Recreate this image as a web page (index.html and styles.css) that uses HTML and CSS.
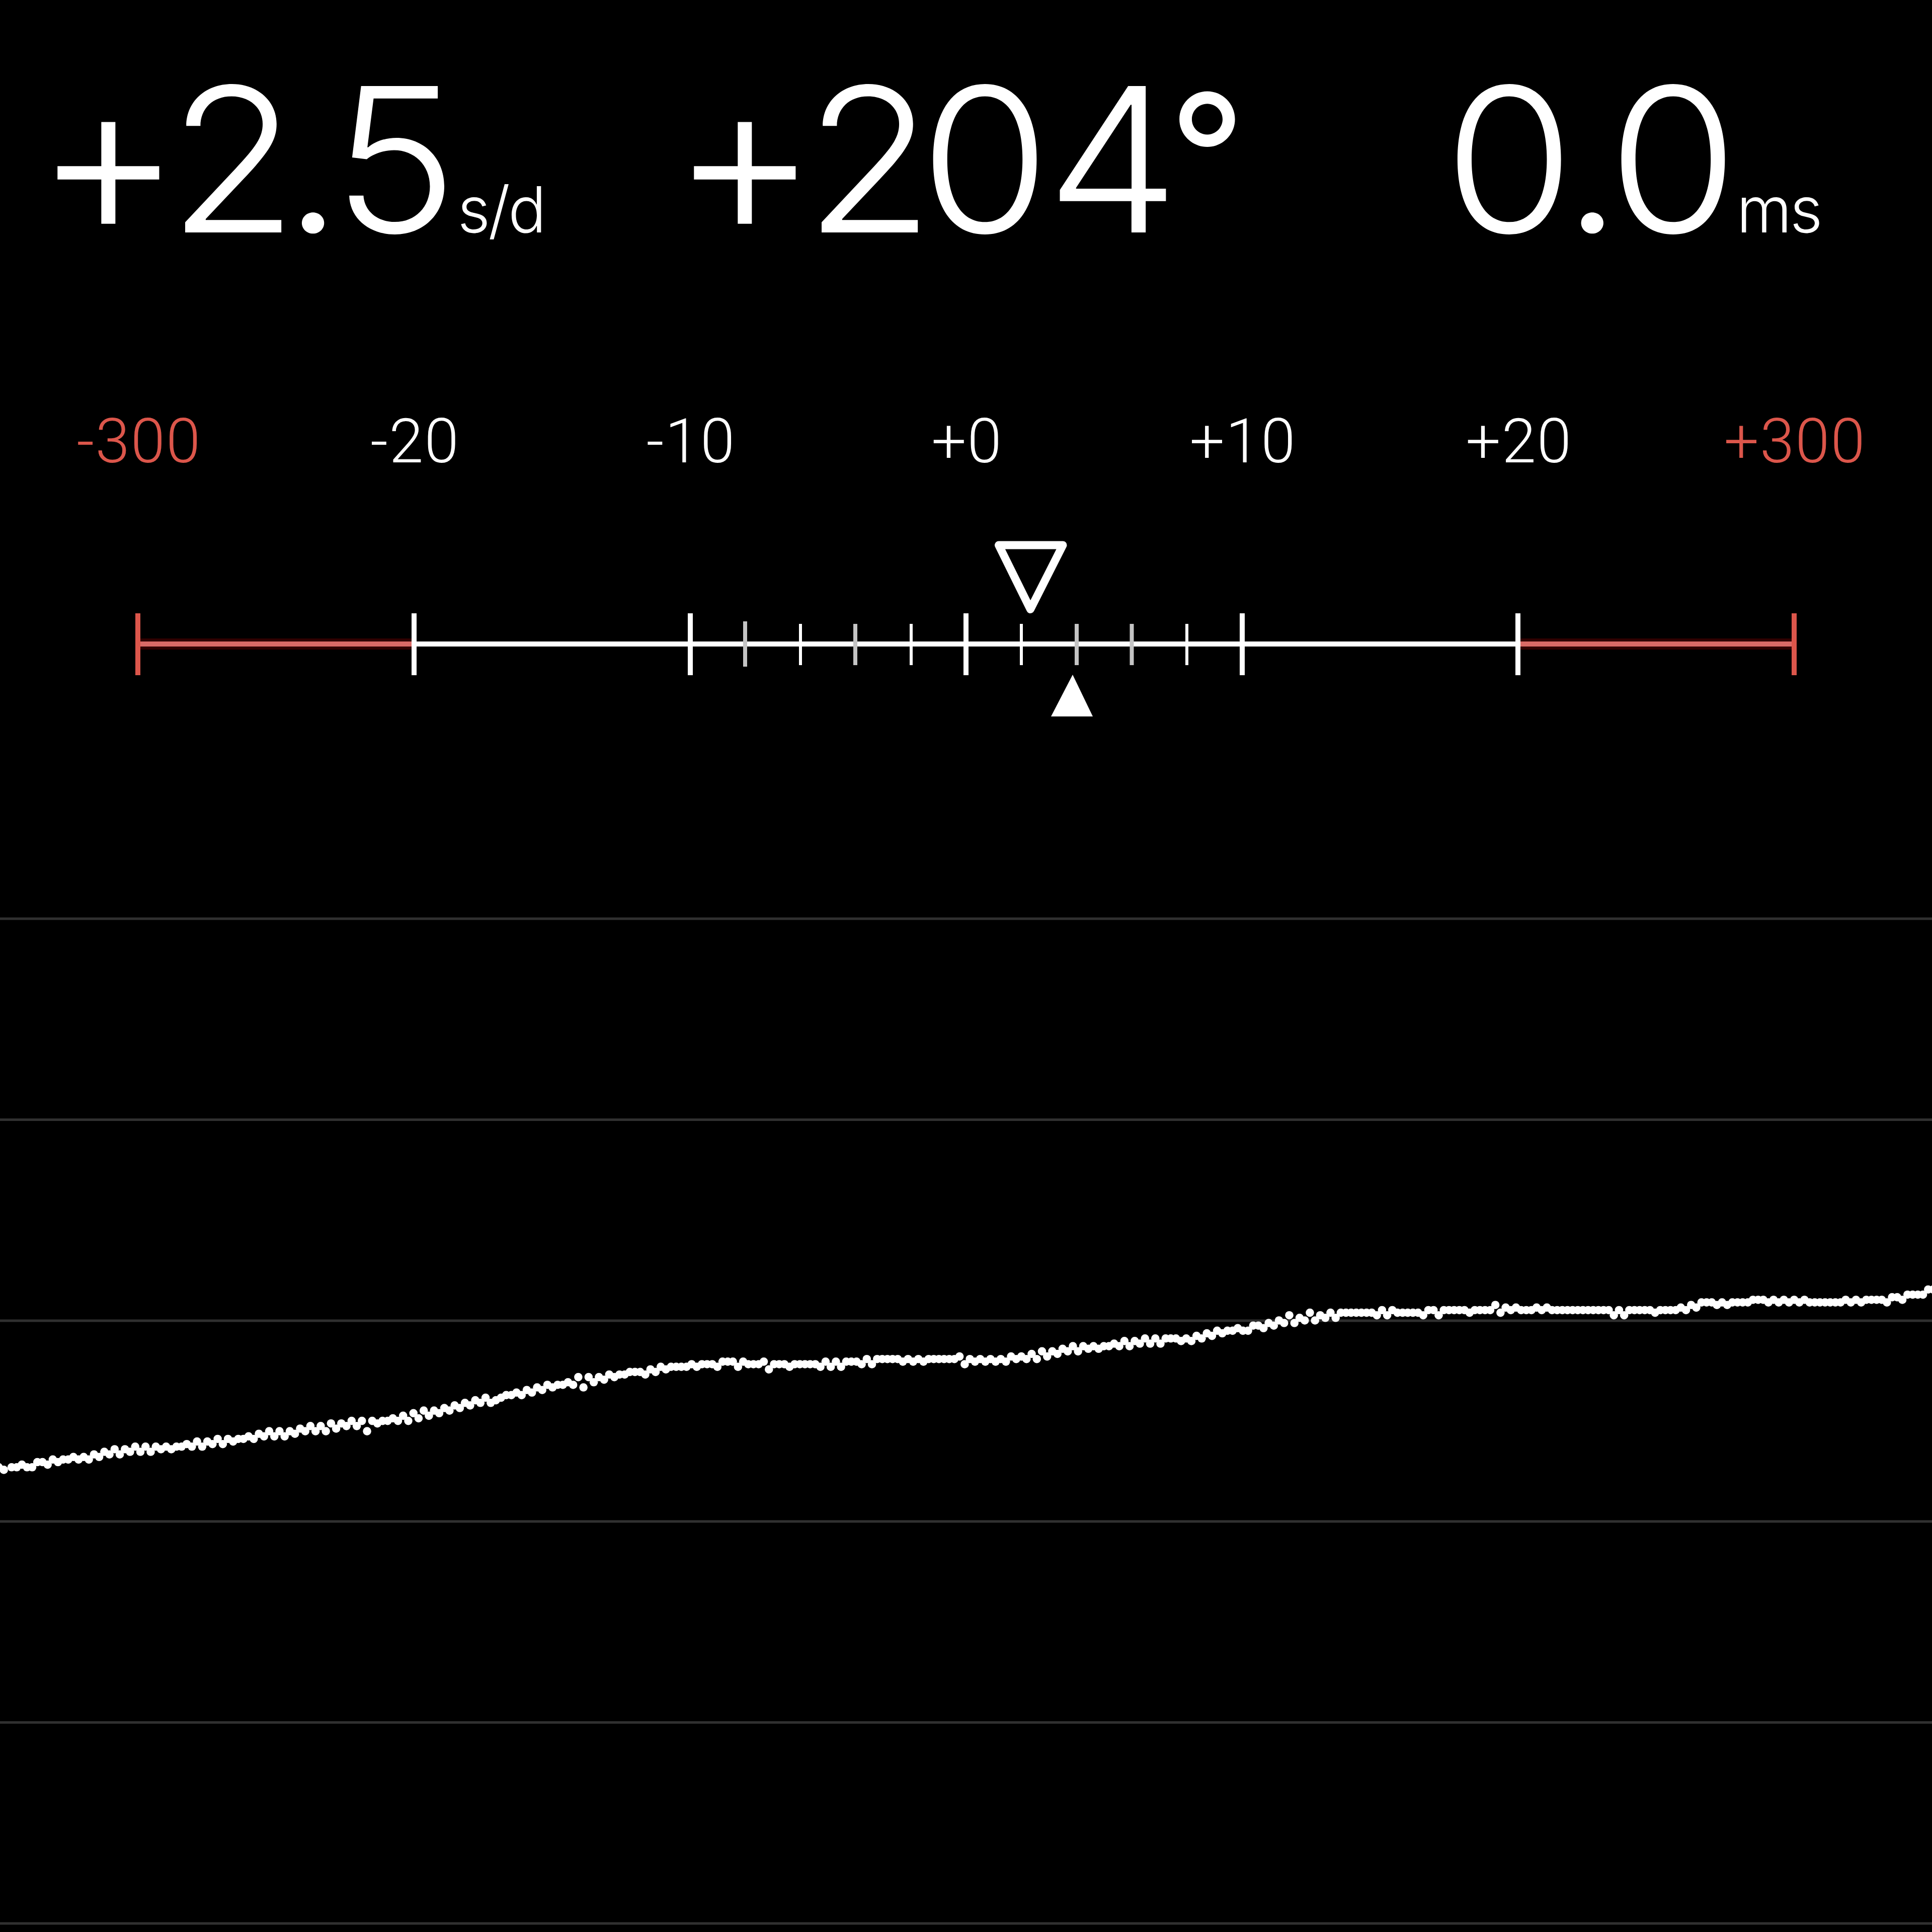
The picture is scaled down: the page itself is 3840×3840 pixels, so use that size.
FILE: index.html
```html
<!DOCTYPE html>
<html lang="en">
  <head>
    <meta charset="utf-8">
    <title>Timegrapher</title>
    <link rel="stylesheet" href="styles.css">
  </head>
  <body>

    <div class="timegrapher">

      <div class="readouts">
        <div class="readout rate"><span class="sign">+</span><span class="value"><span class="lead">2</span>.5</span><span class="unit">s/d</span></div>
        <div class="readout amplitude"><span class="sign">+</span><span class="value"><span class="lead">2</span>04</span><span class="degree">°</span></div>
        <div class="readout beat"><span class="value"><span class="lead">0</span>.0</span><span class="unit">ms</span></div>
      </div>

      <div class="labels">
        <span class="label limit">-300</span>
        <span class="label">-20</span>
        <span class="label">-10</span>
        <span class="label">+0</span>
        <span class="label">+10</span>
        <span class="label">+20</span>
        <span class="label limit">+300</span>
      </div>

      <svg class="scale" viewBox="0 0 3840 380">
        <!-- line -->
        <path class="halo" d="M274 220H823M3017 220H3566"/>
        <path class="axis-limit" d="M274 220H823M3017 220H3566"/>
        <path class="axis" d="M823 220H3017"/>

        <!-- ticks -->
        <path class="minor soft" d="M1481 175V265M1700 180V262M2140 180V262M2249.500 180V262"/>
        <path class="minor" d="M1591 180V262M1811 180V262M2030 180V262M2359 180V262"/>
        <path class="major" d="M823 159V282M1372 159V282M1920 159V282M2469 159V282M3017 159V282"/>
        <path class="major major-limit" d="M274 159V282M3566 159V282"/>

        <!-- markers -->
        <path class="marker-current" d="M1985 23.500H2112.500L2048 151Z"/>
        <path class="marker-average" d="M2132 281L2172 364H2089Z"/>
      </svg>

      <svg class="chart" id="chart" viewBox="0 0 3840 2400">
        <path class="grid" d="M0 386H3840M0 785.500H3840M0 1185H3840M0 1584H3840M0 1983.500H3840M0 2383H3840"/>
        <g id="trace"></g>
      </svg>

    </div>

    <script src="trace.js"></script>
  </body>
</html>
```
FILE: styles.css
```css
html, body {
  margin: 0;
  background-color: #000;
}

.timegrapher {
  width: 3840px;
  height: 3840px;
  overflow: hidden;
  display: flex;
  flex-direction: column;
  background-color: #000;
  color: #fff;
  font-family: Inter, "Liberation Sans", sans-serif;
  font-weight: 300;
}

/* Readouts */

.readouts {
  height: 780px;
  display: grid;
  grid-template-columns: 1280px 1280px 1280px;
  box-sizing: border-box;
  padding-top: 66px;
}

.readout {
  font-size: 400px;
  line-height: 500px;
  white-space: nowrap;
}

.rate {
  padding-left: 69px;
}

.amplitude {
  padding-left: 54px;
}

.beat {
  padding-left: 310px;
}

.sign {
  font-size: 448px;
  line-height: 0;
  letter-spacing: -28px;
  vertical-align: -9px;
}

.value {
  display: inline-block;
  letter-spacing: -0.035em;
  transform: scaleX(1.05);
  transform-origin: left;
}

.amplitude .value {
  letter-spacing: -0.018em;
}

.lead {
  letter-spacing: -0.069em;
}

.beat .value {
  letter-spacing: -0.042em;
}

.beat .lead {
  letter-spacing: -0.057em;
}

.degree {
  font-size: 336px;
  font-weight: 400;
  line-height: 0;
  vertical-align: 34px;
  margin-left: 22px;
}

.unit {
  font-size: 126px;
  line-height: 1;
  letter-spacing: -4px;
  margin-left: 41px;
}

/* Scale */

.labels {
  height: 280px;
  display: grid;
  grid-template-columns: repeat(7, 1fr);
  text-align: center;
  font-family: Roboto, "Liberation Sans", sans-serif;
  font-size: 123px;
  letter-spacing: 2px;
  line-height: 195px;
}

.label {
  padding-left: 4px;
}

.limit {
  color: #dc564b;
}

.scale {
  width: 3840px;
  height: 380px;
  display: block;
}

.scale path {
  fill: none;
  stroke: #fff;
  stroke-width: 10;
}

.scale .axis-limit {
  stroke: #d96a66;
}

.scale .halo {
  stroke: #300000;
  stroke-width: 22;
}

.scale .major-limit {
  stroke: #dc564b;
}

.scale .minor {
  stroke-width: 6;
}

.scale .soft {
  stroke: #c4c4c4;
  stroke-width: 8;
}

.scale .marker-current {
  stroke-width: 16;
  stroke-linejoin: round;
}

.scale .marker-average {
  fill: #fff;
  stroke: none;
}

/* Chart */

.chart {
  width: 3840px;
  height: 2400px;
  display: block;
}

.grid {
  stroke: #303030;
  stroke-width: 5;
}

#trace {
  fill: #fff;
}
```
FILE: trace.js
```js
// one value per beat, in chart steps, bigger is lower
const beats = [
  69, 69, 68, 69, 69, 67, 67, 68, 66, 67, 66, 66, 65, 66, 65, 66, 64, 65, 63, 64,
  62, 64, 62, 63, 61, 63, 61, 63, 61, 62, 61, 62, 61, 61, 60, 61, 59, 61, 59, 60,
  58, 60, 58, 59, 58, 58, 57, 58, 56, 57, 55, 57, 55, 57, 55, 56, 54, 55, 53, 55,
  53, 55, 52, 54, 52, 53, 51, 53, 51, 55, 51, 52, 51, 51, 50, 51, 49, 51, 48, 50,
  47, 49, 47, 48, 46, 47, 45, 46, 44, 45, 43, 44, 42, 44, 43, 42, 41, 41, 40, 41,
  39, 40, 38, 39, 37, 38, 37, 37, 36, 37, 34, 38, 34, 36, 34, 35, 33, 34, 33, 33,
  32, 32, 32, 33, 31, 32, 30, 31, 30, 30, 30, 30, 29, 30, 29, 29, 29, 30, 28, 28,
  28, 30, 28, 29, 29, 29, 28, 31, 29, 29, 29, 30, 29, 29, 29, 29, 29, 30, 28, 30,
  28, 30, 28, 28, 28, 29, 27, 29, 27, 27, 27, 27, 27, 28, 27, 28, 27, 28, 27, 27,
  27, 27, 27, 27, 26, 29, 27, 28, 27, 28, 27, 28, 27, 28, 26, 27, 26, 27, 25, 27,
  24, 26, 24, 25, 23, 24, 22, 24, 22, 23, 22, 23, 22, 22, 21, 22, 20, 22, 20, 21,
  19, 21, 19, 21, 19, 19, 19, 20, 19, 20, 18, 19, 17, 18, 16, 17, 16, 16, 15, 16,
  16, 14, 14, 15, 13, 14, 12, 13, 10, 13, 11, 12, 9, 12, 10, 11, 9, 11, 9, 9,
  9, 9, 9, 9, 9, 10, 8, 10, 8, 9, 9, 9, 9, 9, 10, 8, 8, 10, 8, 8,
  8, 8, 8, 9, 8, 8, 8, 8, 6, 9, 7, 8, 7, 8, 8, 8, 7, 8, 7, 8,
  8, 8, 8, 8, 8, 8, 8, 8, 8, 8, 8, 10, 8, 10, 8, 8, 8, 8, 8, 9,
  8, 8, 8, 8, 7, 8, 6, 7, 5, 5, 5, 6, 5, 6, 5, 5, 5, 5, 4, 4,
  4, 5, 4, 5, 4, 5, 4, 5, 4, 5, 5, 5, 5, 5, 5, 5, 4, 5, 4, 5,
  4, 4, 4, 4, 5, 3, 3, 4, 2, 2, 2, 2, 0, 0
]

const STEP = 5.12
const trace = document.getElementById('trace')

function addDot(x, level) {
  const dot = document.createElementNS('http://www.w3.org/2000/svg', 'circle')
  dot.setAttribute('cx', x.toFixed(2))
  dot.setAttribute('cy', (1123 + level * STEP).toFixed(2))
  dot.setAttribute('r', 8.3)
  trace.appendChild(dot)
}

// the tail of the previous sweep
addDot(-2.6, 69)
addDot(7.6, 70)

beats.forEach((level, i) => addDot(23 + i * STEP * 2, level))
```
